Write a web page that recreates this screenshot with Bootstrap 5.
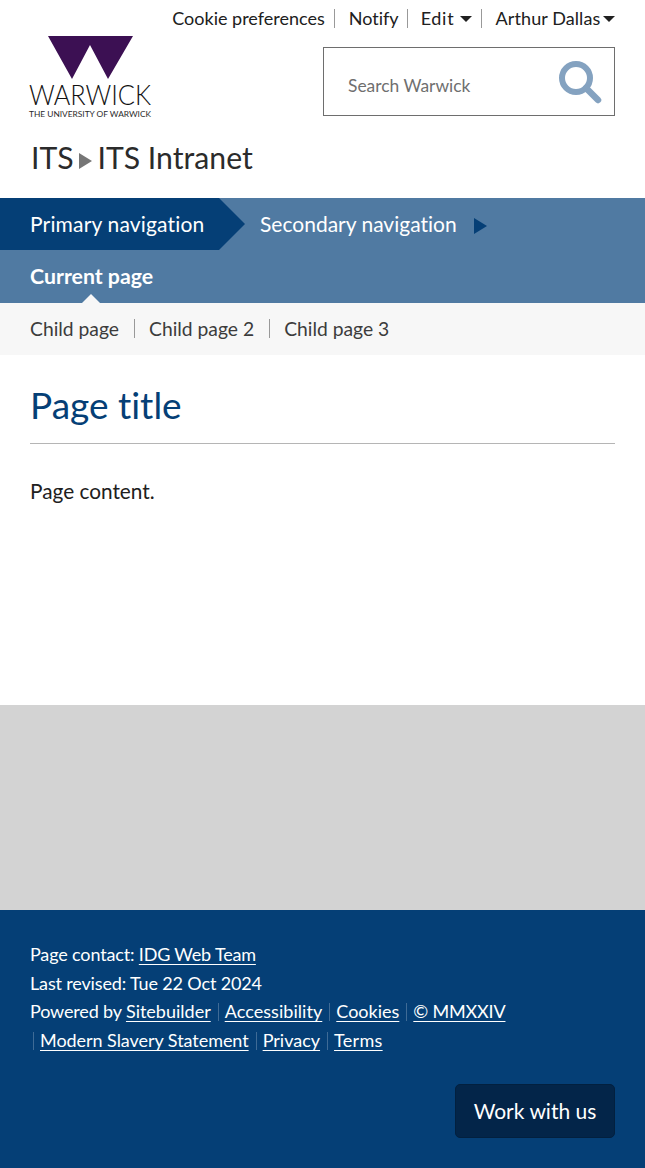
<!DOCTYPE html>
<html lang="en">
<head>
  <meta charset="UTF-8">
  <meta name="viewport" content="width=device-width, initial-scale=1.0">
  <title>ITS Intranet</title>
  <link href="https://cdn.jsdelivr.net/npm/bootstrap@5.3.0/dist/css/bootstrap.min.css" rel="stylesheet">
  <style>
    body { font-family: Lato, "Liberation Sans", sans-serif; font-size: 18px; line-height: 1.6; color: #202020; font-variant-ligatures: none; }
    a { color: inherit; text-decoration: none; }
    .site-head { height: 198px; padding: 0 30px; }
    .util-links { height: 36px; font-size: 18px; line-height: 19px; padding-top: 9px; }
    .util-links a { padding: 0 9px 0 14px; border-right: 1px solid #999; }
    .util-links a:first-child { padding-left: 0; }
    .util-links a:last-child { padding-right: 0; border-right: 0; letter-spacing: .08px; }
    .util-links a.util-notify { padding: 0 8px 0 14px; }
    .util-links a.util-edit { padding-left: 13px; letter-spacing: .7px; }
    .caret-down { display: inline-block; border: 6px solid transparent; border-top-color: #202020; border-bottom-width: 0; vertical-align: 3px; margin-left: -2px; }
    .util-edit .caret-down { margin-left: 0; }
    .logo-box { margin-left: -2px; height: 82px; }
    .logo-box svg { overflow: visible; display: block; }
    .logo-word { font-family: Lato, sans-serif; font-weight: 300; fill: #111; }
    .logo-sub { font-family: Lato, sans-serif; font-weight: 400; fill: #2a2a2a; }
    .search-box { width: 292px; height: 69px; margin-top: 11px; border: 1px solid #6e6e6e; padding: 0 12px 0 24px; color: #6f6f6f; font-size: 17.4px; }
    .search-label { padding-top: 8px; }
    .crumbs { font-size: 30.2px; line-height: 40px; margin-top: 19px; color: #2b2b2b; padding-left: 1px; }
    .crumb-arrow { display: inline-block; border: 8px solid transparent; border-left: 13px solid #767676; border-right-width: 0; margin: 0 6px 0 5px; vertical-align: 0; }
    .nav-strip { background: #507aa2; color: #fff; font-size: 21px; }
    .nav-primary { position: relative; background: #053f76; height: 52px; width: 219px; padding-left: 30px; line-height: 52px; letter-spacing: .17px; }
    .nav-primary::after { content: ""; position: absolute; left: 219px; top: 0; border-style: solid; border-width: 26px 0 26px 26px; border-color: transparent transparent transparent #053f76; }
    .nav-second { padding-left: 41px; line-height: 52px; }
    .second-arrow { display: inline-block; border: 8px solid transparent; border-left: 13px solid #053f76; border-right-width: 0; margin-left: 17px; vertical-align: -2px; }
    .nav-current { position: relative; height: 53px; padding-left: 30px; line-height: 53px; font-weight: 700; font-size: 21.3px; }
    .nav-current::after { content: ""; position: absolute; left: 82px; bottom: 0; border-style: solid; border-width: 0 9px 9px; border-color: transparent transparent #f7f7f7; }
    .child-strip { background: #f7f7f7; height: 52px; padding: 0 0 2px 30px; font-size: 19.3px; color: #3c3c3c; }
    .child-strip a { line-height: 19px; padding-right: 15px; margin-right: 14px; border-right: 1px solid #999; }
    .child-strip a:last-child { border-right: 0; }
    .page-main { height: 350px; padding: 0 30px; }
    .page-heading { font-size: 37px; line-height: 44px; margin: 0; padding: 28px 0 16px; color: #053f76; font-weight: 400; border-bottom: 1px solid #b5b5b5; }
    .page-text { font-size: 20.8px; line-height: 32px; margin: 31px 0 0; }
    .grey-band { height: 205px; background: #d3d3d3; }
    .site-foot { height: 258px; background: #053f76; color: #fff; padding: 30px 30px 0; font-size: 18px; line-height: 28.7px; letter-spacing: -.15px; }
    .site-foot a { text-decoration: underline; text-underline-offset: 3px; letter-spacing: 0; }
    .site-foot a.tight-link { letter-spacing: -.18px; }
    .site-foot a.long-link { letter-spacing: -.05px; }
    .site-foot a.loose-link { letter-spacing: .05px; }
    .site-foot a.terms-link { letter-spacing: .3px; }
    .foot-sep { display: inline-block; width: 1px; height: 18px; background: #3f6b96; margin: 0 6px 0 7px; vertical-align: -3px; }
    .foot-lead { margin-left: 3px; }
    .work-btn { width: 160px; height: 54px; margin-top: 29px; background: #032549; border: 1px solid #02203f; color: #fff; font-size: 21px; border-radius: 5px; padding: 0; }
  </style>
</head>
<body>
  <header class="site-head">
    <div class="util-links d-flex justify-content-end align-items-start">
      <a href="#">Cookie preferences</a>
      <a class="util-notify" href="#">Notify</a>
      <a class="util-edit" href="#">Edit <span class="caret-down"></span></a>
      <a href="#">Arthur Dallas <span class="caret-down"></span></a>
    </div>
    <div class="d-flex justify-content-between align-items-start">
      <div class="logo-box">
        <svg width="124" height="82" viewBox="0 0 124 82">
          <path fill="#3c1053" d="M20 0H105L80 43 62 9 44 43Z"/>
          <text class="logo-word" x="1" y="69" font-size="27" textLength="122" lengthAdjust="spacingAndGlyphs">WARWICK</text>
          <text class="logo-sub" x="1" y="81" font-size="8.3" textLength="122" lengthAdjust="spacingAndGlyphs">THE UNIVERSITY OF WARWICK</text>
        </svg>
      </div>
      <div class="search-box d-flex justify-content-between align-items-center">
        <span class="search-label">Search Warwick</span>
        <svg width="44" height="44" viewBox="0 0 44 44">
          <circle cx="18" cy="18" r="14" fill="none" stroke="#84a2c0" stroke-width="6"/>
          <path d="M28 28 L40 40" stroke="#84a2c0" stroke-width="6.5" stroke-linecap="round"/>
        </svg>
      </div>
    </div>
    <div class="crumbs"><a href="#">ITS</a><span class="crumb-arrow"></span><a href="#">ITS Intranet</a></div>
  </header>

  <nav class="nav-strip">
    <div class="d-flex">
      <a class="nav-primary d-block" href="#">Primary navigation</a>
      <a class="nav-second d-block" href="#">Secondary navigation<span class="second-arrow"></span></a>
    </div>
    <div class="nav-current">Current page</div>
  </nav>
  <div class="child-strip d-flex align-items-center">
    <a href="#">Child page</a>
    <a href="#">Child page 2</a>
    <a href="#">Child page 3</a>
  </div>

  <main class="page-main">
    <h1 class="page-heading">Page title</h1>
    <p class="page-text">Page content.</p>
  </main>
  <div class="grey-band"></div>

  <footer class="site-foot">
    <div>Page contact: <a class="tight-link" href="#">IDG Web Team</a></div>
    <div>Last revised: Tue 22 Oct 2024</div>
    <div>Powered by <a href="#">Sitebuilder</a><span class="foot-sep"></span><a class="loose-link" href="#">Accessibility</a><span class="foot-sep"></span><a href="#">Cookies</a><span class="foot-sep"></span><a class="tight-link" href="#">© MMXXIV</a></div>
    <div><span class="foot-sep foot-lead"></span><a class="long-link" href="#">Modern Slavery Statement</a><span class="foot-sep"></span><a href="#">Privacy</a><span class="foot-sep"></span><a class="terms-link" href="#">Terms</a></div>
    <div class="d-flex justify-content-end"><button class="btn work-btn" type="button">Work with us</button></div>
  </footer>
  <script src="https://cdn.jsdelivr.net/npm/bootstrap@5.3.0/dist/js/bootstrap.bundle.min.js"></script>
</body>
</html>
